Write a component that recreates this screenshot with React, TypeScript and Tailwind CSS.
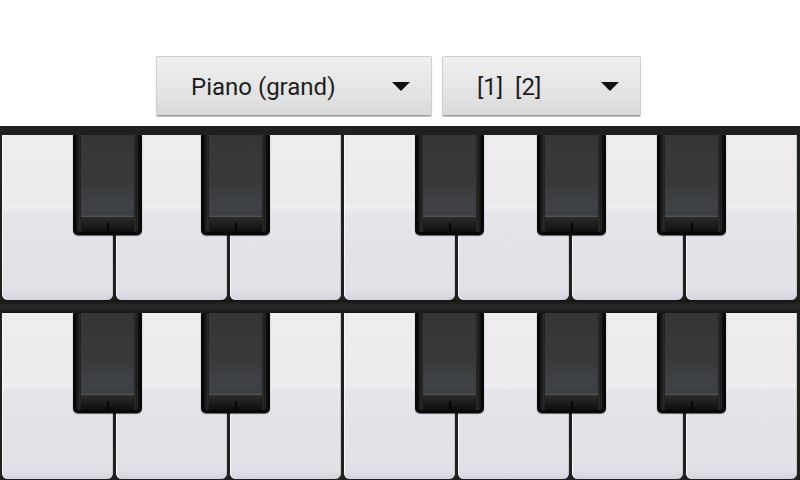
import React from "react";

const whiteKeyBg =
  "bg-[linear-gradient(to_bottom,#efecef_0%,#edeaee_42%,#efeef2_44%,#e6e5ea_47%,#e3e2e6_70%,#e2e1e7_94%,#d4d4de_100%)]";

function BlackKey({ left }: { left: number }) {
  return (
    <div
      className="absolute top-0 w-[69px] h-[100px] bg-[#080808] rounded-b-[5px] flex flex-col px-[3px] pb-[3px] shadow-[0_1px_1px_rgba(0,0,0,0.6)]"
      style={{ left }}
    >
      <div className="flex-1 flex flex-col bg-[linear-gradient(to_right,#101010_0%,#2a2a2a_6%,#111_10%,#111_90%,#2a2a2a_94%,#101010_100%)] px-[5px] rounded-b-[3px]">
        <div className="h-[82px] bg-[linear-gradient(to_bottom,#363636_0%,#393939_60%,#404346_85%,#3c3e42_97%,#575757_100%)]" />
        <div className="flex-1 relative bg-[linear-gradient(to_bottom,#2c2c2c_0%,#1a1a1a_60%,#0e0e0e_100%)] rounded-b-[2px]">
          <div className="absolute left-1/2 top-[6px] bottom-0 w-[2px] -ml-[1px] bg-[#050505]" />
        </div>
      </div>
    </div>
  );
}

function Keyboard({ className }: { className?: string }) {
  const blacks = [73, 201, 415, 537, 657];
  return (
    <div className={"relative flex gap-[3px] pl-[2px] pr-[3px] " + (className ?? "")}>
      {Array.from({ length: 7 }).map((_, i) => (
        <div
          key={i}
          className={
            "flex-1 rounded-b-[6px] shadow-[inset_1px_0_0_#f8f8fa,inset_-1px_0_0_#c9c9cf] " +
            whiteKeyBg
          }
        />
      ))}
      {blacks.map((l) => (
        <BlackKey key={l} left={l} />
      ))}
    </div>
  );
}

function Spinner({ label, width }: { label: string; width: number }) {
  return (
    <div
      className="h-[60px] flex items-center justify-between pl-[34px] pr-[21px] rounded-[2px] border border-[#cfcfcf] border-b-[#9a9a9a] bg-[linear-gradient(to_bottom,#eeeeee_0%,#e6e6e6_50%,#d9d9d9_100%)] shadow-[0_1px_1px_rgba(0,0,0,0.25)]"
      style={{ width }}
    >
      <span className="text-[24px] leading-none text-[#1e1e1e] whitespace-pre pt-[1px]" style={{ fontFamily: "Roboto, 'Noto Sans', sans-serif" }}>
        {label}
      </span>
      <svg width="18" height="9" viewBox="0 0 18 9">
        <polygon points="0,0 18,0 9,9" fill="#111" />
      </svg>
    </div>
  );
}

export default function App() {
  return (
    <div className="w-[800px] h-[480px] bg-white flex flex-col overflow-hidden" style={{ fontFamily: "Roboto, sans-serif" }}>
      <div className="h-[126px] flex items-start pt-[56px] pl-[156px] gap-[10px]">
        <Spinner label="Piano (grand)" width={276} />
        <Spinner label="[1]  [2]" width={199} />
      </div>
      <div className="flex-1 flex flex-col bg-[#202020] pt-[9px] pb-[1px]">
        <Keyboard className="h-[165px]" />
        <div className="h-[13px] bg-[linear-gradient(to_bottom,#141414_0%,#2a2a2a_50%,#161616_100%)]" />
        <Keyboard className="flex-1" />
      </div>
    </div>
  );
}
